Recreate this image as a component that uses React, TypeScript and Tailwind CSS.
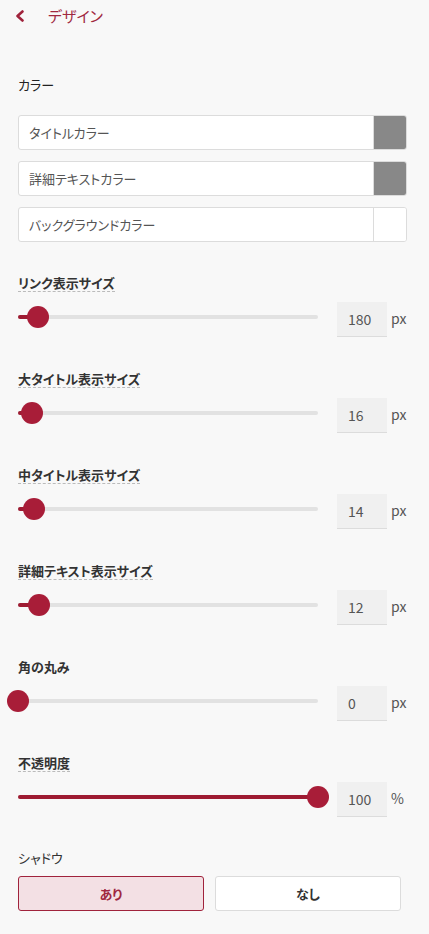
const font = "font-['Noto_Sans_CJK_JP','Noto_Sans',sans-serif] [font-feature-settings:'palt']";

type SliderProps = {
  label: string;
  value: number;
  unit: string;
  pos: number; // thumb center offset from track start, px
  underline?: boolean;
};

function SizeSlider({ label, value, unit, pos, underline = true }: SliderProps) {
  return (
    <div className="flex flex-col">
      <div className="h-[19px]">
        <span
          className={
            "inline-block text-[13px] leading-[17px] font-bold text-[#333] " +
            (underline ? "border-b border-dashed border-[#bbb]" : "")
          }
        >
          {label}
        </span>
      </div>
      <div className="mt-[14px] flex items-start h-[35px]">
        <div className="relative w-[300px] h-[22px] mt-[4px]">
          <div className="absolute left-0 right-0 top-[9px] h-[4px] rounded-full bg-[#e2e2e2]" />
          <div
            className="absolute left-0 top-[9px] h-[4px] rounded-full bg-[#9e1b32]"
            style={{ width: pos }}
          />
          <div
            className="absolute top-0 w-[22px] h-[22px] rounded-full bg-[#a81d38]"
            style={{ left: pos - 11 }}
          />
        </div>
        <div className="ml-[19px] w-[50px] h-[35px] bg-[#f0f0f0] border-b border-[#dcdcdc] flex items-center pl-[11px] pt-[1px] text-[14px] text-[#555]">
          {value}
        </div>
        <span className="ml-[4px] mt-[6px] text-[14px] text-[#555]">{unit}</span>
      </div>
    </div>
  );
}

function ColorRow({ label, color }: { label: string; color?: string }) {
  return (
    <div className="flex h-[35px] bg-white border border-[#dcdcdc] rounded-[3px] overflow-hidden">
      <div className="flex-1 flex items-center pl-[10px] text-[13px] text-[#555]">{label}</div>
      <div
        className={"w-[33px] border-l border-[#dcdcdc] " + (color ? "" : "bg-white")}
        style={color ? { backgroundColor: color } : undefined}
      />
    </div>
  );
}

export default function App() {
  return (
    <div className={"min-h-[934px] w-[429px] bg-[#f8f8f8] " + font}>
      {/* Header */}
      <div className="flex items-center h-[32px] pl-[15px]">
        <svg width="10" height="12" viewBox="0 0 10 12" className="text-[#a0233c]">
          <polyline
            points="7.5,1.5 2.5,6 7.5,10.5"
            fill="none"
            stroke="currentColor"
            strokeWidth="2.6"
            strokeLinecap="round"
            strokeLinejoin="round"
          />
        </svg>
        <span className="ml-[23px] text-[15px] text-[#a0283f]">デザイン</span>
      </div>

      <div className="px-[18px]">
        {/* Colors */}
        <div className="mt-[43px] text-[13px] leading-[20px] text-[#222]">カラー</div>
        <div className="mt-[20px] w-[389px] flex flex-col gap-[11px]">
          <ColorRow label="タイトルカラー" color="#888888" />
          <ColorRow label="詳細テキストカラー" color="#888888" />
          <ColorRow label="バックグラウンドカラー" />
        </div>

        {/* Sliders */}
        <div className="mt-[27px] flex flex-col gap-[28px]">
          <SizeSlider label="リンク表示サイズ" value={180} unit="px" pos={20} />
          <SizeSlider label="大タイトル表示サイズ" value={16} unit="px" pos={14} />
          <SizeSlider label="中タイトル表示サイズ" value={14} unit="px" pos={16} />
          <SizeSlider label="詳細テキスト表示サイズ" value={12} unit="px" pos={21} />
          <SizeSlider label="角の丸み" value={0} unit="px" pos={0} underline={false} />
          <SizeSlider label="不透明度" value={100} unit="%" pos={300} />
        </div>

        {/* Shadow */}
        <div className="mt-[31px] text-[13px] leading-[20px] text-[#333]">シャドウ</div>
        <div className="mt-[8px] w-[383px] grid grid-cols-2 gap-[11px]">
          <button className="h-[35px] rounded-[3px] border border-[#a0233c] bg-[#f3e0e4] text-[13px] font-bold text-[#a0283f]">
            あり
          </button>
          <button className="h-[35px] rounded-[3px] border border-[#dcdcdc] bg-white text-[13px] font-bold text-[#333]">
            なし
          </button>
        </div>
      </div>
    </div>
  );
}
